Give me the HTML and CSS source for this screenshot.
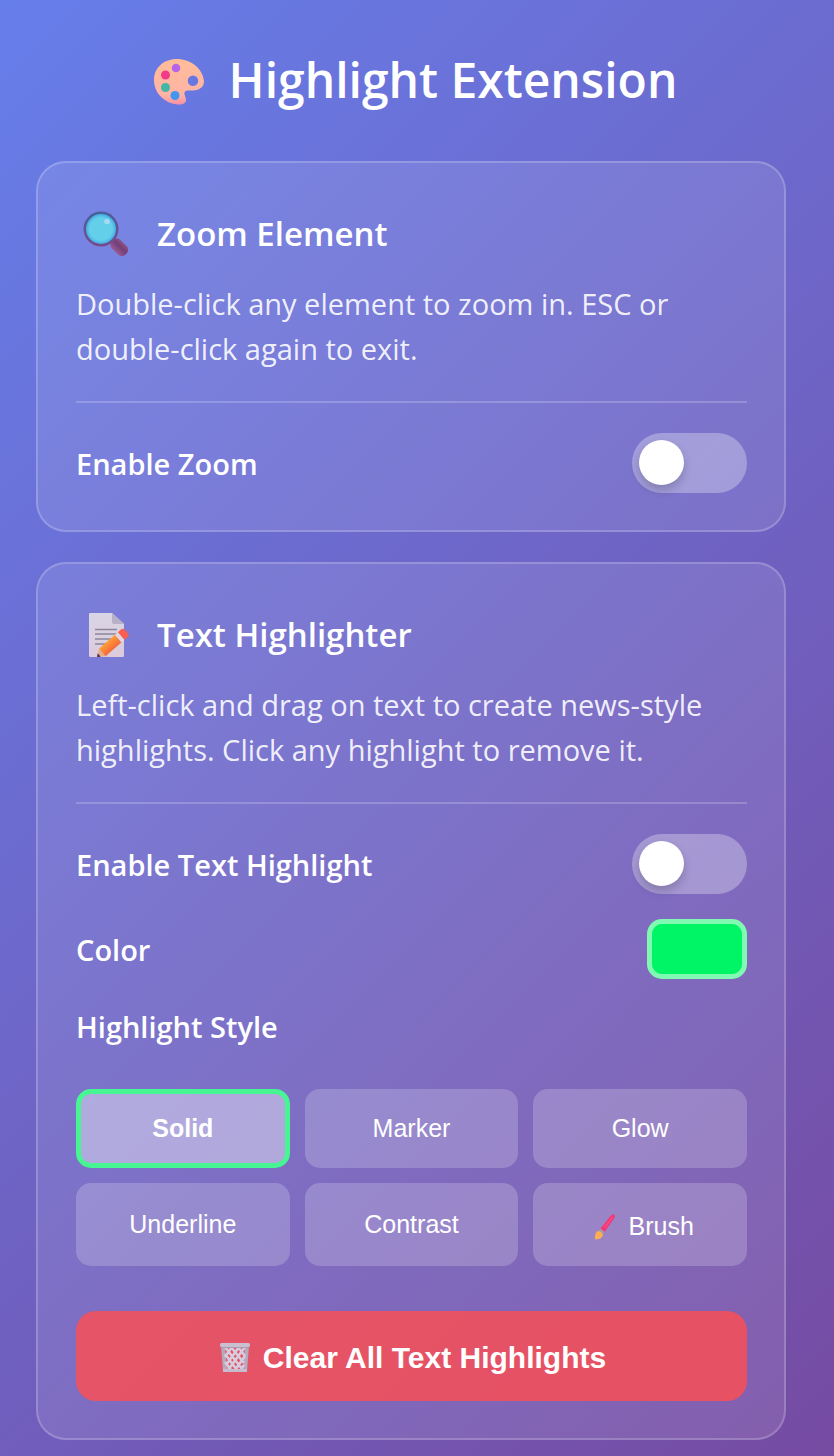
FILE: index.html
```html
<!DOCTYPE html>
<html lang="en">
<head>
    <meta charset="UTF-8">
    <meta name="viewport" content="width=device-width, initial-scale=1.0">
    <title>Highlight Extension</title>
    <link rel="stylesheet" href="styles.css">
</head>
<body>
    <h1 class="title">
        <svg class="title-icon" viewBox="0 -4 52 52" aria-hidden="true">
            <defs>
                <linearGradient id="palette" x1="0" y1="0" x2="0" y2="1">
                    <stop offset="0" stop-color="#ffbd98"/>
                    <stop offset="0.8" stop-color="#ffb3a6"/>
                    <stop offset="1" stop-color="#f490a4"/>
                </linearGradient>
            </defs>
            <path fill="url(#palette)" fill-rule="evenodd" d="M24 1C10 1 1 10.500 1 22C1 36 13 46.500 27 46.500C31 46.500 33.500 44 33 41C32.500 38 30.500 36 32 33.500C33 32 36 32.500 40 32.500C47 32 51 29 51 23C50 11 38 1 24 1ZM40 17.500A5.200 5.200 0 1 1 40 28A5.200 5.200 0 1 1 40 17.500Z"/>
            <circle cx="23" cy="10" r="4.300" fill="#b565e8"/>
            <circle cx="12.500" cy="17" r="4.500" fill="#f23a88"/>
            <circle cx="12.500" cy="29.500" r="4.500" fill="#43b6a6"/>
            <circle cx="22" cy="37.500" r="4.500" fill="#4196ed"/>
        </svg>
        Highlight Extension
    </h1>

    <!-- Zoom -->
    <section class="card">
        <div class="card-header">
            <span class="card-icon">
                <svg width="46" height="48" viewBox="0 -2 46 48" aria-hidden="true">
                    <defs>
                        <linearGradient id="ring" x1="0" y1="0" x2="0" y2="1">
                            <stop offset="0" stop-color="#48619b"/>
                            <stop offset="1" stop-color="#784989"/>
                        </linearGradient>
                        <linearGradient id="handle" x1="0" y1="0" x2="0" y2="1">
                            <stop offset="0" stop-color="#8d5387"/>
                            <stop offset="0.4" stop-color="#743e78"/>
                            <stop offset="1" stop-color="#965a91"/>
                        </linearGradient>
                        <radialGradient id="lens">
                            <stop offset="0.75" stop-color="#64cfe9"/>
                            <stop offset="1" stop-color="#43aee7"/>
                        </radialGradient>
                    </defs>
                    <rect x="27" y="30" width="19" height="12" rx="5" transform="rotate(45 36 36)" fill="url(#handle)"/>
                    <circle cx="18" cy="18" r="17.500" fill="url(#ring)"/>
                    <circle cx="18" cy="18" r="15" fill="url(#lens)"/>
                    <circle cx="24" cy="10.500" r="2.800" fill="#a6daf3"/>
                </svg>
            </span>
            <h2>Zoom Element</h2>
        </div>
        <p class="description">Double-click any element to zoom in. ESC or double-click again to exit.</p>
        <div class="controls">
            <div class="row">
                <label for="zoomToggle">Enable Zoom</label>
                <input type="checkbox" class="toggle" id="zoomToggle">
            </div>
        </div>
    </section>

    <!-- Text highlighter -->
    <section class="card">
        <div class="card-header">
            <span class="card-icon">
                <svg width="46" height="48" viewBox="0 -2 46 48" aria-hidden="true">
                    <defs>
                        <linearGradient id="paper" x1="0" y1="0" x2="0" y2="1">
                            <stop offset="0" stop-color="#d8d5e5"/>
                            <stop offset="1" stop-color="#dccbdc"/>
                        </linearGradient>
                        <linearGradient id="pencil" x1="0" y1="0" x2="0" y2="1">
                            <stop offset="0" stop-color="#ff9f32"/>
                            <stop offset="1" stop-color="#f4693d"/>
                        </linearGradient>
                    </defs>
                    <path fill="url(#paper)" d="M7 1H29L41 12V43.500Q41 45 39.500 45H7.500Q6 45 6 43.500V2Q6 1 7 1Z"/>
                    <path fill="#b8b0c7" d="M29 1L41 12H31Q29 12 29 10Z"/>
                    <path stroke="#8d8799" stroke-width="1.600" d="M12 17.500H34M12 22H34M12 27H29M12 32H25"/>
                    <g transform="translate(14 45) rotate(-41)">
                        <path fill="#e7ae8e" d="M0 0L7 -5V5Z"/>
                        <path fill="#4a3048" d="M0 0L3 -2.200V2.200Z"/>
                        <rect x="7" y="-5" width="22" height="10" fill="url(#pencil)"/>
                        <rect x="28" y="-5" width="4" height="10" fill="#dfd7e5"/>
                        <path fill="#fb5d4f" d="M32 -5H36Q39 -5 39 -2V2Q39 5 36 5H32Z"/>
                    </g>
                </svg>
            </span>
            <h2>Text Highlighter</h2>
        </div>
        <p class="description">Left-click and drag on text to create news-style highlights. Click any highlight to remove it.</p>
        <div class="controls">
            <div class="row">
                <label for="highlightToggle">Enable Text Highlight</label>
                <input type="checkbox" class="toggle" id="highlightToggle">
            </div>
            <div class="row">
                <label for="highlightColor">Color</label>
                <input type="color" class="color-picker" id="highlightColor" value="#00f566">
            </div>
            <div class="row">
                <span class="label" id="styleLabel">Highlight Style</span>
            </div>
        </div>
        <div class="style-grid" role="group" aria-labelledby="styleLabel">
            <button class="style-button active" data-style="solid">Solid</button>
            <button class="style-button" data-style="marker">Marker</button>
            <button class="style-button" data-style="glow">Glow</button>
            <button class="style-button" data-style="underline">Underline</button>
            <button class="style-button" data-style="contrast">Contrast</button>
            <button class="style-button with-icon" data-style="brush">
                <svg width="32" height="26" viewBox="0 0 32 26" aria-hidden="true">
                    <path fill="#f23877" d="M11 15L22 1.500Q24 -0.500 25.500 1Q26.500 2 25 4.500L15.500 18Z"/>
                    <path fill="#fa4c88" d="M15 13L23 3L24 4L16 14Z"/>
                    <path fill="#a59aa8" d="M11.500 14.500L15.500 18L13.500 20.500L9.500 17Z"/>
                    <path fill="#ffad50" d="M9 17Q13 17.500 14 21Q13 25 7 25.500Q5.500 25.500 6 23.500Q6 18 9 17Z"/>
                </svg>
                Brush
            </button>
        </div>
        <button class="clear-button with-icon" id="clearButton">
            <svg width="32" height="30" viewBox="0 0 32 30" aria-hidden="true">
                <path fill="#b4a9bd" fill-rule="evenodd" d="M2 2H30L28 29H4ZM6 4L8 26H24L26 4Z"/>
                <path fill="none" stroke="#d8cdde" stroke-width="2.600" d="M6 19L12 27M6 11L18 27M6 4L23 26M12 4L25 20M19 4L26 13M26 4L9 27M20 4L7 22M13 4L6 14M26 13L16 27M25 22L22 26"/>
                <rect x="1" y="0" width="30" height="4" rx="1.500" fill="#c9bfce"/>
                <path stroke="#a89bb2" d="M2 4.500H30"/>
                <rect x="4" y="26" width="24" height="3" rx="1" fill="#c8bdcf"/>
            </svg>
            Clear All Text Highlights
        </button>
    </section>

    <script>
        const styleButtons = document.querySelectorAll('.style-button');

        styleButtons.forEach((button) => {
            button.addEventListener('click', () => {
                styleButtons.forEach((other) => other.classList.remove('active'));
                button.classList.add('active');
            });
        });
    </script>
</body>
</html>
```
FILE: styles.css
```css
* {
    box-sizing: border-box;
}

body {
    margin: 0;
    padding: 40px 48px 16px 36px;
    min-height: 100vh;
    font-family: "Segoe UI", "Open Sans", sans-serif;
    color: white;
    background: linear-gradient(135deg, #667eea 0%, #764ba2 100%);
}

.title {
    display: flex;
    justify-content: center;
    align-items: center;
    gap: 24px;
    margin: 0 0 41px;
    padding-left: 8px;
    font-size: 48px;
    line-height: 80px;
    font-weight: 600;
}

.title-icon {
    width: 52px;
    height: 52px;
}

/* Cards */
.card {
    padding: 37px 37px 37px 38px;
    background: rgba(255, 255, 255, 0.1);
    border: 2px solid rgba(255, 255, 255, 0.2);
    border-radius: 30px;
}

.card + .card {
    margin-top: 30px;
}

.card-header {
    display: flex;
    align-items: center;
    gap: 21px;
    height: 66px;
    margin-bottom: 15px;
}

.card-icon {
    display: flex;
    justify-content: center;
    width: 60px;
}

h2 {
    margin: 0;
    font-size: 33px;
    font-weight: 600;
}

.description {
    margin: 0 0 30px;
    font-size: 29px;
    line-height: 45px;
    color: rgba(255, 255, 255, 0.9);
}

.controls {
    display: flex;
    flex-direction: column;
    gap: 25px;
    padding-top: 30px;
    border-top: 2px solid rgba(255, 255, 255, 0.2);
}

.row {
    display: flex;
    justify-content: space-between;
    align-items: center;
}

.row label,
.label {
    font-size: 29px;
    line-height: 45px;
    font-weight: 600;
}

/* Toggle switch */
.toggle {
    appearance: none;
    display: flex;
    width: 115px;
    height: 60px;
    margin: 0;
    padding: 7px;
    background: rgba(255, 255, 255, 0.3);
    border-radius: 30px;
    cursor: pointer;
}

.toggle::before {
    content: "";
    width: 45px;
    height: 45px;
    background: white;
    border-radius: 50%;
    box-shadow: 0 5px 10px rgba(0, 0, 0, 0.2);
}

.toggle:checked {
    justify-content: flex-end;
    background: #47f593;
}

.color-picker {
    appearance: none;
    width: 100px;
    height: 60px;
    padding: 0;
    background: #00f566;
    border: 5px solid rgba(255, 255, 255, 0.5);
    border-radius: 15px;
    cursor: pointer;
}

.color-picker::-webkit-color-swatch-wrapper {
    padding: 0;
}

.color-picker::-webkit-color-swatch {
    border: none;
    border-radius: 10px;
}

/* Highlight styles */
.style-grid {
    display: grid;
    grid-template-columns: repeat(3, 1fr);
    grid-template-rows: 79px 83px;
    gap: 15px;
    margin-top: 40px;
}

.style-button {
    display: flex;
    justify-content: center;
    align-items: center;
    gap: 8px;
    padding: 0;
    font-family: "Liberation Sans", Arial, sans-serif;
    font-size: 25px;
    color: white;
    background: rgba(255, 255, 255, 0.2);
    border: none;
    border-radius: 15px;
    cursor: pointer;
}

.style-button.active {
    font-weight: bold;
    background: rgba(255, 255, 255, 0.4);
    border: 5px solid #47f593;
}

.clear-button {
    display: flex;
    justify-content: center;
    align-items: center;
    gap: 12px;
    width: 100%;
    height: 90px;
    margin-top: 45px;
    padding: 0;
    font-family: "Liberation Sans", Arial, sans-serif;
    font-size: 30px;
    font-weight: bold;
    color: white;
    background: rgba(255, 78, 80, 0.8);
    border: none;
    border-radius: 20px;
    cursor: pointer;
}

.with-icon {
    padding: 4px 0 0 2px;
}
```
